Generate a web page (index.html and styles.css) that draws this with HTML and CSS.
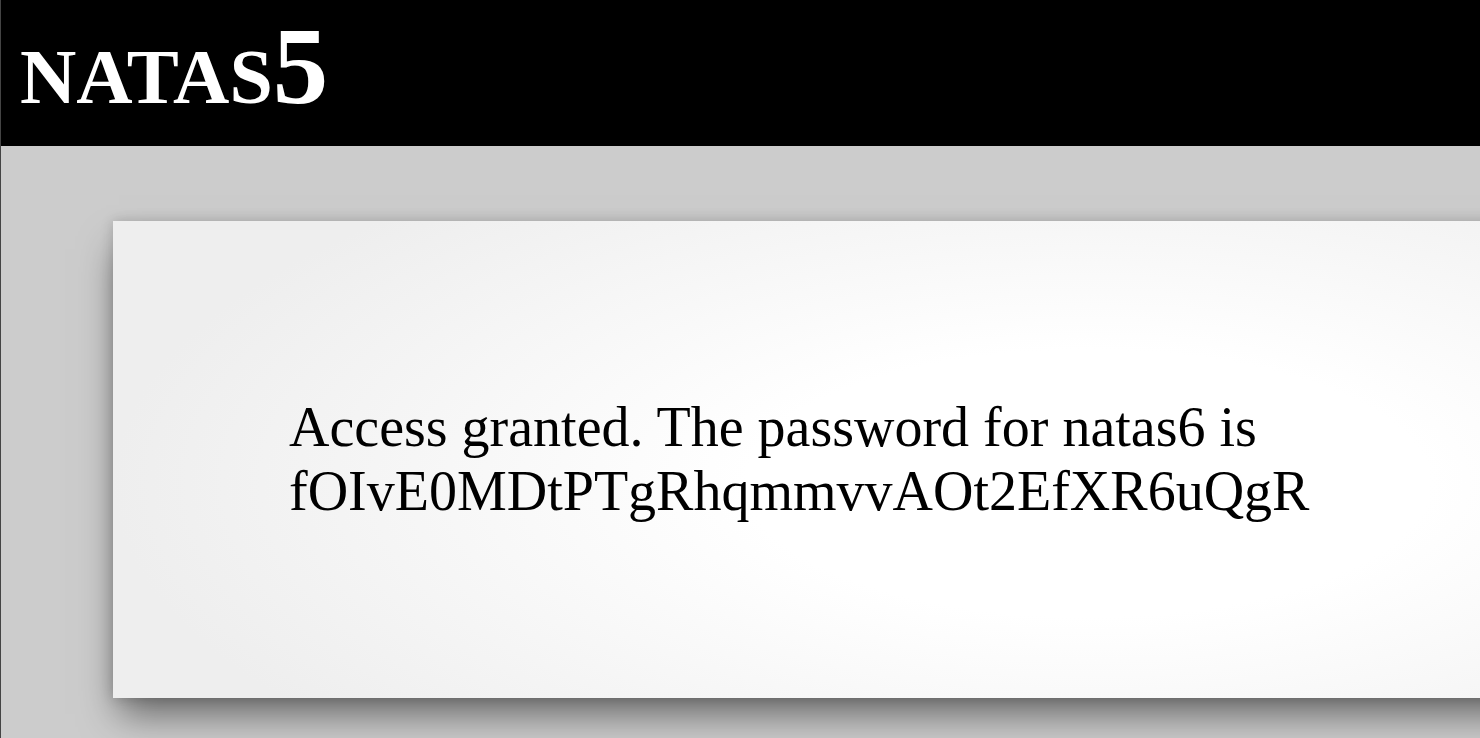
FILE: index.html
```html
<!DOCTYPE html>
<html>
<head>
<meta charset="utf-8">
<title>natas5</title>
<link rel="stylesheet" href="styles.css">
</head>
<body>
<div class="page">
  <header class="banner"><h1 class="title">natas<span class="num">5</span></h1></header>
  <main class="content">
    <p class="msg">Access granted. The password for natas6 is fOIvE0MDtPTgRhqmmvvAOt2EfXR6uQgR</p>
  </main>
</div>
</body>
</html>
```
FILE: styles.css
```css
html, body {
  margin: 0;
  padding: 0;
  height: 100%;
  overflow: hidden;
}
body {
  background: #cccccc;
  font-family: "Liberation Serif", "Times New Roman", serif;
}
.page {
  border-left: 1px solid #444;
  min-height: 100%;
  box-sizing: border-box;
}
.banner {
  background: #000;
  height: 146px;
  box-sizing: border-box;
  padding: 10px 0 0 19px;
}
.title {
  margin: 0;
  color: #fff;
  font-weight: bold;
  font-variant: small-caps;
  text-transform: lowercase;
  font-size: 111px;
  line-height: 1;
}
.content {
  margin: 75px 0 0 112px;
  width: 1500px;
  height: 477px;
  box-sizing: border-box;
  padding: 174px 0 0 176px;
  background: radial-gradient(ellipse 65% 80% at 65% 55%, #ffffff 35%, #eeeeee 100%);
  box-shadow: 0 0 12px rgba(0,0,0,0.18), 0 22px 36px -6px rgba(0,0,0,0.5);
}
.msg {
  margin: 0;
  font-size: 56px;
  line-height: normal;
  width: 1100px;
  color: #000;
}
```
